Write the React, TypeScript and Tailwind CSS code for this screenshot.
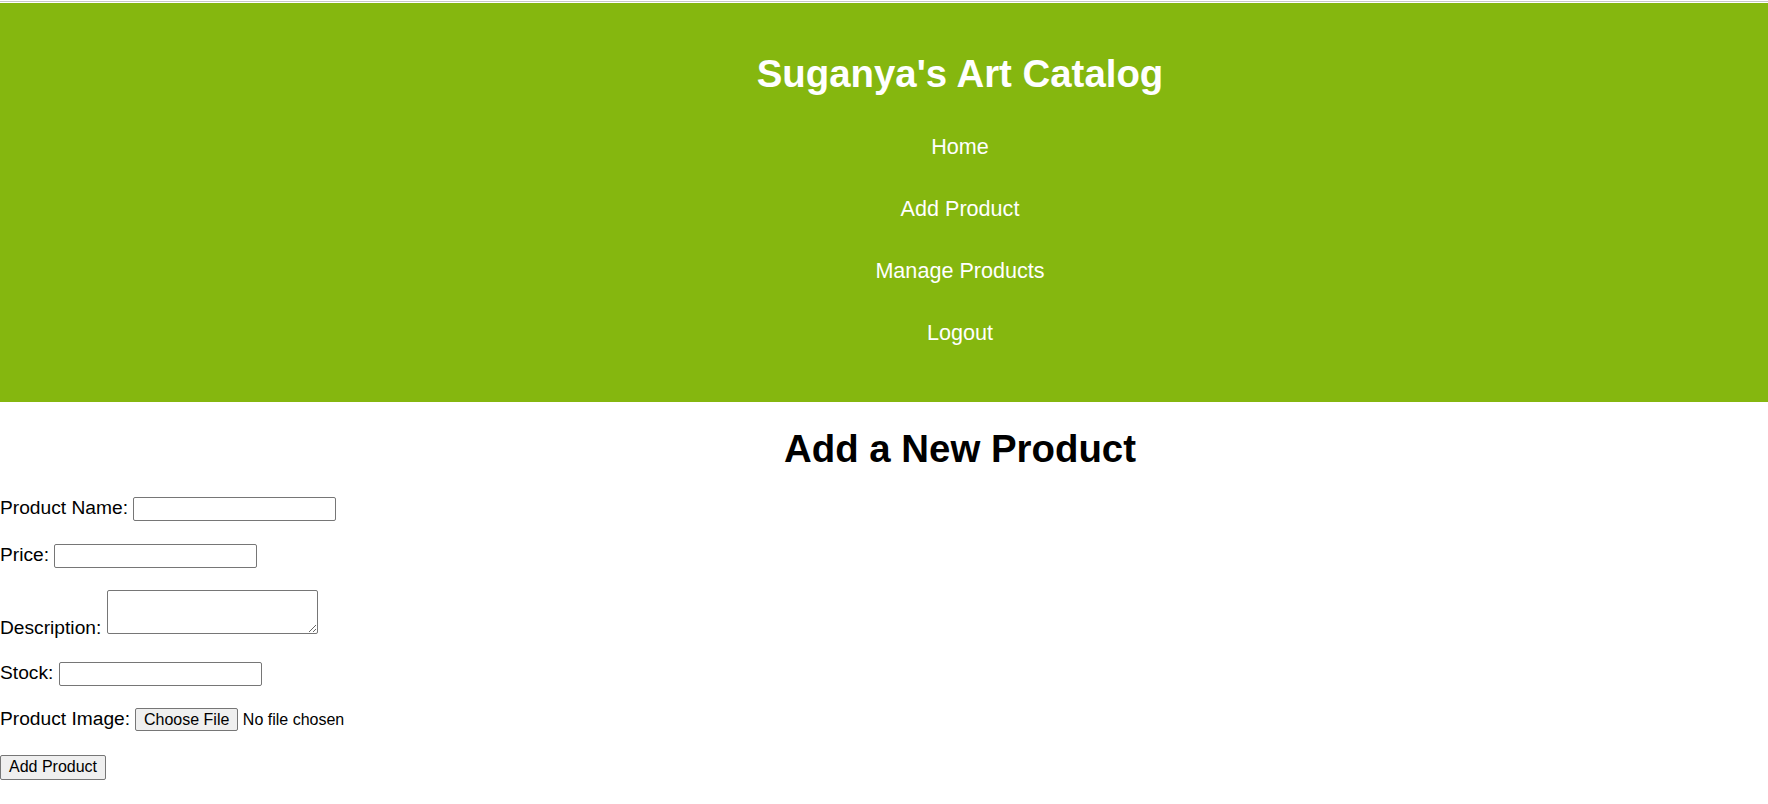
import React from 'react';

const navLinks = ['Home', 'Add Product', 'Manage Products', 'Logout'];

function Field({ label, children }: { label: string; children: React.ReactNode }) {
    return (
        <div className="mt-[22.5px] leading-[22px]">
            {label} {children}
        </div>
    );
}

function TextInput() {
    return (
        <input
            type="text"
            className="w-[203px] h-[24px] border border-[#767676] rounded-[2px] px-[2px] text-[16px] leading-[normal] bg-white align-baseline"
        />
    );
}

export default function App() {
    return (
        <div className="w-full min-h-screen overflow-hidden bg-white text-black font-['Liberation_Sans',Arial,sans-serif] text-[19.2px]">
            {/* thin rule above the banner */}
            <div className="h-px bg-white" />
            <div className="h-px bg-[#c8c8c8]" />
            <div className="h-px bg-white" />

            <div className="w-[1920px]">
                <header className="bg-[#85b70f] pt-[49px] pb-[57px] text-center text-white">
                    <h1 className="text-[38.4px] leading-[44px] font-bold">Suganya's Art Catalog</h1>
                    <nav className="mt-[38px]">
                        <ul className="flex flex-col items-center gap-[37px]">
                            {navLinks.map((link) => (
                                <li key={link} className="text-[21.6px] leading-[25px]">
                                    <a href="#" className="text-white">
                                        {link}
                                    </a>
                                </li>
                            ))}
                        </ul>
                    </nav>
                </header>

                <h2 className="mt-[25px] text-center text-[38.4px] leading-[44px] font-bold">Add a New Product</h2>
            </div>

            <form className="pt-[3.5px] pb-[30px]" onSubmit={(e) => e.preventDefault()}>
                <Field label="Product Name:">
                    <TextInput />
                </Field>
                <Field label="Price:">
                    <TextInput />
                </Field>
                <Field label="Description:">
                    <textarea className="w-[211px] h-[44px] border border-[#767676] rounded-[2px] p-[2px] text-[16px] leading-[normal] bg-white align-baseline" />
                </Field>
                <Field label="Stock:">
                    <TextInput />
                </Field>
                <Field label="Product Image:">
                    <span className="inline-block text-[16px] leading-[normal]">
                        <span className="inline-block h-[23px] px-[7.5px] border border-[#767676] rounded-[2px] bg-[#efefef] leading-[21px]">
                            Choose File
                        </span>
                        <span className="ml-[5px]">No file chosen</span>
                    </span>
                </Field>
                <div className="mt-[24px] leading-[22px]">
                    <button
                        type="submit"
                        className="h-[24.5px] px-[8px] border border-[#767676] rounded-[2px] bg-[#efefef] text-[16px] leading-[normal] align-baseline"
                    >
                        Add Product
                    </button>
                </div>
            </form>
        </div>
    );
}
